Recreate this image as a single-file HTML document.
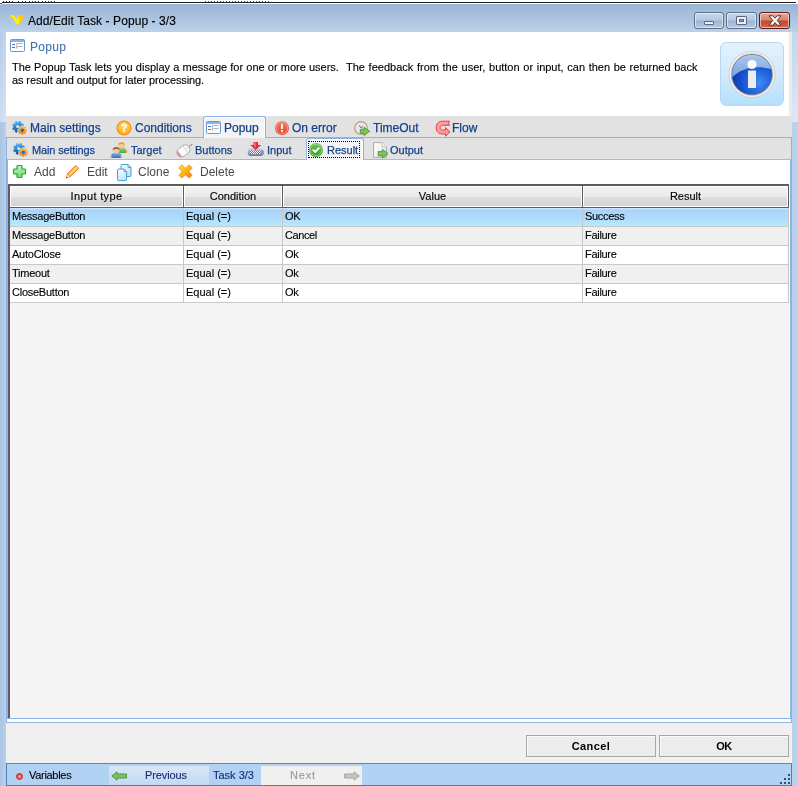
<!DOCTYPE html>
<html>
<head>
<meta charset="utf-8">
<title>Add/Edit Task - Popup - 3/3</title>
<style>
*{box-sizing:border-box;margin:0;padding:0}
html,body{width:798px;height:786px;overflow:hidden}
body{position:relative;background:#b9d1ea;font-family:"Liberation Sans",sans-serif;font-size:11px;color:#000}
.abs{position:absolute}
#root{-webkit-text-stroke:0.12px}
.tab{-webkit-text-stroke:0.25px}
.btn{-webkit-text-stroke:0}
#topstrip{left:0;top:0;width:798px;height:4px;background:#fff}
#topline{left:2px;top:2px;width:794px;height:1px;background:#1e1e1e}
#frame{left:0;top:3px;width:798px;height:783px;background:linear-gradient(to right,#aac4e3 0,#b6ceea 5px,#b8d0ea 6px,#b8d0ea 792px,#bbd2eb 798px)}
#titlebar{left:0;top:4px;width:798px;height:28px;background:linear-gradient(to bottom,#9bb5d5 0,#a8c1df 45%,#bcd1e9 100%)}
#title{left:28px;top:14px;font-size:12px;color:#000;white-space:nowrap;letter-spacing:0.08px}
.wbtn{top:12px;height:17px;border:1px solid #5f6f86;border-radius:3px;background:linear-gradient(to bottom,#c8d8ec 0,#b4c8e2 48%,#9db5d4 52%,#b3c9e4 100%);box-shadow:inset 0 0 0 1px rgba(255,255,255,.55)}
#bclose{border-color:#5a1c1c;background:linear-gradient(to bottom,#e6a797 0,#d8806b 48%,#c2462c 52%,#d06a4c 100%)}
#content{left:6px;top:32px;width:786px;height:731px;background:#f0f0f0}
#hdr{left:6px;top:32px;width:783px;height:84px;background:#fff}
#hdrr{left:789px;top:32px;width:3px;height:84px;background:#ebebeb}
#hname{left:30px;top:40px;font-size:12px;color:#3f73b0;white-space:nowrap;letter-spacing:0.3px;-webkit-text-stroke:0.1px}
#hdesc{left:12px;top:61px;width:700px;font-size:11px;line-height:13px;color:#000;word-spacing:0.5px}
#infobox{left:720px;top:42px;width:64px;height:64px;border:1px solid #b5d8f3;border-radius:6px;background:linear-gradient(to bottom,#e3f1fd 0,#d3eafc 50%,#b5e0fc 100%)}
#tabs1{left:6px;top:116px;width:786px;height:22px;background:#e2e2e2}
#tabs2{left:7px;top:138px;width:784px;height:21px;background:#e2e2e2}
.tab{top:0;height:22px;white-space:nowrap;color:#15428b}
.t1{font-size:12px;line-height:24px}
.t2{font-size:11px;line-height:24px}
#page{left:6px;top:137px;width:786px;height:586px;border:1px solid #8db2e3;border-top:0}
#inner{left:7px;top:159px;width:784px;height:560px;border:1px solid #8db2e3;border-top-color:#99bce8;background:#fff}
.pl{top:137px;height:1px;background:#8db2e3}
#tool{left:8px;top:160px;width:782px;height:24px;background:#fff}
.tl{top:0;line-height:24px;font-size:12px;color:#484848;white-space:nowrap;-webkit-text-stroke:0}
#grid{left:8px;top:184px;width:781px;height:534px;background:#f4f4f4;border-left:2px solid #5c5c5c;border-top:2px solid #5c5c5c}
#ghead{left:0;top:0;width:779px;height:22px;background:#5c5c5c}
.hc{top:0;height:21px;border:1px solid #fff;background:linear-gradient(to bottom,#f3f3f3 0,#e9e9e9 55%,#dddddd 55%,#d3d3d3 100%);text-align:center;line-height:19px;font-size:11px}
.row{left:0;width:779px;height:19px;border-bottom:1px solid #c8c8c8}
.row div{position:absolute;top:0;height:18px;line-height:16px;padding-left:2px;border-right:1px solid #c8c8c8;white-space:nowrap;font-size:11px}
.row .c1{letter-spacing:-0.25px}
.row .c3{letter-spacing:-0.4px}
.row .c4{letter-spacing:-0.3px}
.sel{background:linear-gradient(to bottom,#cbe4fd 0,#cbe4fd 1px,#a9d2fb 2px,#b0dcfc 60%,#b5ebfd 100%)}
.alt{background:#f0f0f0}
.wht{background:#fff}
#sep1{left:6px;top:718px;width:786px;height:5px;background:#fff;border:1px solid #8db2e3}
.btn{top:735px;height:22px;border:1px solid #a8a8a8;background:#ececec;text-align:center;font-weight:bold;font-size:11px;line-height:20px;box-shadow:inset 1px 1px 0 #fafafa}
#status{left:6px;top:763px;width:786px;height:23px;background:#b2d2f4;border:1px solid #4f7db4;border-top-color:#5a86bc}
.sb{top:2px;height:18px;line-height:18px;font-size:11px;white-space:nowrap}

#seltab1{left:197px;top:0;width:63px;height:23px;background:#f4f4f5;border:1px solid #8db2e3;border-bottom:0;border-radius:3px 3px 0 0;box-shadow:inset 1px 1px 0 #fff,inset -1px 0 0 #fff}
#seltab2{left:299px;top:0;width:58px;height:22px;background:#f4f4f5;border:1px solid #8db2e3;border-bottom:0;border-radius:3px 3px 0 0;box-shadow:inset 1px 1px 0 #fff,inset -1px 0 0 #fff}
#focus{left:1px;top:2px;width:52px;height:17px;border:1px dotted #000}
#prevbtn{left:102px;top:2px;width:100px;height:19px;background:linear-gradient(to bottom,#d9e6f7,#c3d9f4)}
#nextbtn{left:254px;top:2px;width:101px;height:19px;background:#f0f0f0}
</style>
</head>
<body>
<div id="root" style="position:absolute;left:0;top:0;width:798px;height:786px;will-change:transform">
<div class="abs" id="frame"></div>
<div class="abs" id="titlebar"></div>
<div class="abs" id="topstrip"></div>
<div class="abs" id="topline"></div><div class="abs" style="left:3px;top:1px;width:1px;height:1px;background:#333"></div><div class="abs" style="left:6px;top:1px;width:1px;height:1px;background:#333"></div><div class="abs" style="left:9px;top:1px;width:1px;height:1px;background:#333"></div><div class="abs" style="left:12px;top:1px;width:1px;height:1px;background:#333"></div><div class="abs" style="left:18px;top:1px;width:1px;height:1px;background:#333"></div><div class="abs" style="left:22px;top:1px;width:1px;height:1px;background:#333"></div><div class="abs" style="left:25px;top:1px;width:1px;height:1px;background:#333"></div><div class="abs" style="left:29px;top:1px;width:1px;height:1px;background:#333"></div><div class="abs" style="left:32px;top:1px;width:1px;height:1px;background:#333"></div><div class="abs" style="left:35px;top:1px;width:1px;height:1px;background:#333"></div><div class="abs" style="left:38px;top:1px;width:1px;height:1px;background:#333"></div><div class="abs" style="left:42px;top:1px;width:1px;height:1px;background:#333"></div><div class="abs" style="left:45px;top:1px;width:1px;height:1px;background:#333"></div><div class="abs" style="left:48px;top:1px;width:1px;height:1px;background:#333"></div><div class="abs" style="left:51px;top:1px;width:1px;height:1px;background:#333"></div><div class="abs" style="left:54px;top:1px;width:1px;height:1px;background:#333"></div><div class="abs" style="left:205px;top:1px;width:1px;height:1px;background:#555"></div><div class="abs" style="left:208px;top:1px;width:1px;height:1px;background:#555"></div><div class="abs" style="left:211px;top:1px;width:1px;height:1px;background:#555"></div><div class="abs" style="left:214px;top:1px;width:1px;height:1px;background:#555"></div><div class="abs" style="left:217px;top:1px;width:1px;height:1px;background:#555"></div><div class="abs" style="left:220px;top:1px;width:1px;height:1px;background:#555"></div><div class="abs" style="left:223px;top:1px;width:1px;height:1px;background:#555"></div><div class="abs" style="left:226px;top:1px;width:1px;height:1px;background:#555"></div><div class="abs" style="left:229px;top:1px;width:1px;height:1px;background:#555"></div><div class="abs" style="left:232px;top:1px;width:1px;height:1px;background:#555"></div><div class="abs" style="left:235px;top:1px;width:1px;height:1px;background:#555"></div><div class="abs" style="left:238px;top:1px;width:1px;height:1px;background:#555"></div><div class="abs" style="left:241px;top:1px;width:1px;height:1px;background:#555"></div><div class="abs" style="left:244px;top:1px;width:1px;height:1px;background:#555"></div><div class="abs" style="left:247px;top:1px;width:1px;height:1px;background:#555"></div><div class="abs" style="left:250px;top:1px;width:1px;height:1px;background:#555"></div><div class="abs" style="left:253px;top:1px;width:1px;height:1px;background:#555"></div><div class="abs" style="left:256px;top:1px;width:1px;height:1px;background:#555"></div><div class="abs" style="left:259px;top:1px;width:1px;height:1px;background:#555"></div><div class="abs" style="left:262px;top:1px;width:1px;height:1px;background:#555"></div><div class="abs" style="left:265px;top:1px;width:1px;height:1px;background:#555"></div><div class="abs" style="left:268px;top:1px;width:1px;height:1px;background:#555"></div><div class="abs" style="left:0;top:3px;width:2px;height:1px;background:#555"></div><div class="abs" style="left:0;top:4px;width:1px;height:1px;background:#fff"></div>
<svg class="abs" style="left:8px;top:14px" width="16" height="11" viewBox="0 0 16 11"><path d="M0.8 3.6 L2.4 0.9 L5.8 0.9 L9.7 6.4 L9.1 0.9 L13.9 0.9 L15.3 3.6 L11.8 10.3 L8.2 10.3 L4.6 3.6 Z" fill="#fff200"/><path d="M9.1 0.9 L13.9 0.9 L15.3 3.6 L11.8 10.3 L10.6 10.3 L11.9 5.4 Z" fill="#ffc60a"/><path d="M0.8 3.6 L2.4 0.9 L3.6 0.9 L3 3.6Z" fill="#ffc60a"/></svg>
<div class="abs" id="title">Add/Edit Task - Popup - 3/3</div>
<div class="abs wbtn" id="bmin" style="left:694px;width:30px"><div class="abs" style="left:9px;top:8px;width:10px;height:4px;background:#e8eef6;border:1px solid #5a6880;border-radius:1px"></div></div>
<div class="abs wbtn" id="bmax" style="left:726px;width:31px"><div class="abs" style="left:9px;top:3px;width:11px;height:9px;background:#e8eef6;border:1px solid #5a6880;border-radius:1px"><div class="abs" style="left:2px;top:2px;width:5px;height:3px;background:#8aa2c4;border:1px solid #5a6880"></div></div></div>
<div class="abs wbtn" id="bclose" style="left:759px;width:31px"><svg class="abs" style="left:8px;top:2px" width="14" height="11" viewBox="0 0 14 11"><path d="M1 0.8 L4.8 0.8 L7 3.2 L9.2 0.8 L13 0.8 L9.2 5.4 L13 10.2 L9.2 10.2 L7 7.6 L4.8 10.2 L1 10.2 L4.8 5.4 Z" fill="#f6f6f6" stroke="#4a3030" stroke-width="0.9"/></svg></div>

<div class="abs" style="left:0;top:32px;width:6px;height:90px;background:linear-gradient(to bottom,rgba(255,255,255,0.12),rgba(255,255,255,0.42))"></div>
<div class="abs" style="left:792px;top:32px;width:6px;height:90px;background:linear-gradient(to bottom,rgba(255,255,255,0.12),rgba(255,255,255,0.5))"></div>
<div class="abs" id="content"></div>
<div class="abs" id="hdr"></div>
<div class="abs" id="hdrr"></div>
<svg class="abs" style="left:10px;top:39px" width="16" height="14" viewBox="0 0 16 14"><rect x="0.5" y="0.5" width="14" height="12" rx="1" fill="#fbfcfe" stroke="#6a95d2"/><rect x="1" y="1" width="13" height="2" fill="#8db3e8"/><rect x="2" y="5" width="3" height="1" fill="#3d77d8"/><rect x="2" y="8" width="3" height="1" fill="#3d77d8"/><path d="M6.5 6.5 L6.5 4.5 L12.5 4.5 M6.5 9.5 L6.5 7.5 L12.5 7.5" fill="none" stroke="#b4b4b4" stroke-width="1"/></svg>
<div class="abs" id="hname">Popup</div>
<div class="abs" id="hdesc"><span id="hd1" style="display:block;white-space:nowrap;height:13px;position:relative"><span id="hd1a" style="position:absolute;left:0;top:0;word-spacing:0.1px;letter-spacing:0">The Popup Task lets you display a message for one or more users.</span><span id="hd1b" style="position:absolute;left:334px;top:0;word-spacing:0.6px;letter-spacing:0">The feedback from the user, button or input, can then be returned back</span></span><span id="hd2" style="display:block;white-space:nowrap;word-spacing:0;letter-spacing:-0.1px">as result and output for later processing.</span></div>
<div class="abs" id="infobox"></div>
<svg class="abs" style="left:727px;top:50px" width="50" height="50" viewBox="0 0 50 50">
<defs>
<radialGradient id="ig" cx="68%" cy="70%" r="75%"><stop offset="0" stop-color="#3d8bf2"/><stop offset="0.6" stop-color="#1450d0"/><stop offset="1" stop-color="#0b2f9e"/></radialGradient>
<linearGradient id="ih" x1="0" y1="0" x2="0" y2="1"><stop offset="0" stop-color="#b9cfee"/><stop offset="1" stop-color="#6f9de0"/></linearGradient>
<clipPath id="ic"><circle cx="25" cy="24.5" r="20"/></clipPath>
</defs>
<circle cx="25" cy="24.5" r="23" fill="#f2f2f2" stroke="#c9c9c9" stroke-width="0.8"/>
<circle cx="25" cy="24.5" r="21" fill="#9a9a9a"/>
<circle cx="25" cy="24.5" r="20" fill="url(#ig)"/>
<path d="M3 30 C 12 18, 30 14, 47 20 L47 0 L3 0Z" fill="url(#ih)" clip-path="url(#ic)"/>
<circle cx="25" cy="14.5" r="4.6" fill="#fff"/>
<rect x="21" y="20.5" width="8" height="17.5" fill="#ededed"/>
</svg>


<div class="abs" id="tabs1">
<div class="abs" id="seltab1"></div>
<div class="abs tab t1" id="a1" style="left:24px">Main settings</div>
<div class="abs tab t1" id="a2" style="left:129px">Conditions</div>
<div class="abs tab t1" id="a3" style="left:218px">Popup</div>
<div class="abs tab t1" id="a4" style="left:286px">On error</div>
<div class="abs tab t1" id="a5" style="left:367px">TimeOut</div>
<div class="abs tab t1" id="a6" style="left:446px">Flow</div>
</div>
<div class="abs" id="page"></div><div class="abs" id="inner"></div>
<div class="abs pl" style="left:6px;width:198px"></div><div class="abs pl" style="left:265px;width:527px"></div>

<div class="abs" id="tabs2">
<div class="abs" id="seltab2"><div class="abs" id="focus"></div></div>
<div class="abs tab t2" id="b1" style="left:25px;letter-spacing:-0.15px">Main settings</div>
<div class="abs tab t2" id="b2" style="left:124px">Target</div>
<div class="abs tab t2" id="b3" style="left:188px">Buttons</div>
<div class="abs tab t2" id="b4" style="left:260px">Input</div>
<div class="abs tab t2" id="b5" style="left:320px">Result</div>
<div class="abs tab t2" id="b6" style="left:383px">Output</div>
</div>

<div class="abs" id="tool">
<div class="abs tl" id="c1" style="left:26px">Add</div>
<div class="abs tl" id="c2" style="left:79px">Edit</div>
<div class="abs tl" id="c3" style="left:130px">Clone</div>
<div class="abs tl" id="c4" style="left:192px">Delete</div>
</div>
<div class="abs" id="grid">
<div class="abs" id="ghead"></div>
<div class="abs hc" style="left:0;width:173px;letter-spacing:0.35px">Input type</div>
<div class="abs hc" style="left:174px;width:98px">Condition</div>
<div class="abs hc" style="left:273px;width:299px">Value</div>
<div class="abs hc" style="left:573px;width:205px">Result</div>
<div class="abs row sel" style="top:22px"><div class="c1" style="left:0;width:174px">MessageButton</div><div class="c2" style="left:174px;width:99px">Equal (=)</div><div class="c3" style="left:273px;width:300px">OK</div><div class="c4" style="left:573px;width:206px">Success</div></div>
<div class="abs row alt" style="top:41px"><div class="c1" style="left:0;width:174px">MessageButton</div><div class="c2" style="left:174px;width:99px">Equal (=)</div><div class="c3" style="left:273px;width:300px">Cancel</div><div class="c4" style="left:573px;width:206px">Failure</div></div>
<div class="abs row wht" style="top:60px"><div class="c1" style="left:0;width:174px">AutoClose</div><div class="c2" style="left:174px;width:99px">Equal (=)</div><div class="c3" style="left:273px;width:300px">Ok</div><div class="c4" style="left:573px;width:206px">Failure</div></div>
<div class="abs row alt" style="top:79px"><div class="c1" style="left:0;width:174px">Timeout</div><div class="c2" style="left:174px;width:99px">Equal (=)</div><div class="c3" style="left:273px;width:300px">Ok</div><div class="c4" style="left:573px;width:206px">Failure</div></div>
<div class="abs row wht" style="top:98px"><div class="c1" style="left:0;width:174px">CloseButton</div><div class="c2" style="left:174px;width:99px">Equal (=)</div><div class="c3" style="left:273px;width:300px">Ok</div><div class="c4" style="left:573px;width:206px">Failure</div></div>
</div>
<div class="abs" id="sep1"></div>
<div class="abs btn" style="left:526px;width:130px;letter-spacing:0.4px">Cancel</div>
<div class="abs btn" style="left:659px;width:130px;letter-spacing:-0.6px">OK</div>

<div class="abs" id="status">
<div class="abs" style="left:9px;top:9px;width:7px;height:7px;border-radius:4px;background:#e23a40;border:1px solid #d3353a"><div class="abs" style="left:1px;top:1px;width:3px;height:3px;border-radius:2px;background:#f29a9c"></div></div>
<div class="abs sb" id="s1" style="left:22px;letter-spacing:-0.3px">Variables</div>
<div class="abs" id="prevbtn"></div>
<div class="abs sb" id="s2" style="left:138px;letter-spacing:-0.1px;color:#1a2a78">Previous</div>
<div class="abs sb" id="s3" style="left:206px;color:#1a2a78">Task 3/3</div>
<div class="abs" id="nextbtn"></div>
<svg class="abs" style="left:104px;top:7px" width="17" height="10" viewBox="0 0 17 10"><path d="M0.8 5 L6 0.8 L6 3 L15.5 3 L15.5 7 L6 7 L6 9.2 Z" fill="#7cc266" stroke="#4c9a3c" stroke-width="1"/></svg>
<svg class="abs" style="left:336px;top:7px" width="17" height="10" viewBox="0 0 17 10"><path d="M16.2 5 L11 0.8 L11 3 L1.5 3 L1.5 7 L11 7 L11 9.2 Z" fill="#c4c4c4" stroke="#a6a6a6" stroke-width="1"/></svg>
<div class="abs" style="left:773px;top:18px;width:2px;height:2px;background:#33506f"></div><div class="abs" style="left:777px;top:18px;width:2px;height:2px;background:#33506f"></div><div class="abs" style="left:781px;top:18px;width:2px;height:2px;background:#33506f"></div><div class="abs" style="left:777px;top:14px;width:2px;height:2px;background:#33506f"></div><div class="abs" style="left:781px;top:14px;width:2px;height:2px;background:#33506f"></div><div class="abs" style="left:781px;top:10px;width:2px;height:2px;background:#33506f"></div>
<div class="abs sb" id="s4" style="left:283px;letter-spacing:0.8px;color:#9a9a9a">Next</div>
</div>
<!--ICONS-->
<svg class="abs" style="left:12px;top:120.5px" width="16" height="15" viewBox="0 0 16 15"><defs><linearGradient id="gb1" x1="0" y1="0" x2="0.3" y2="1"><stop offset="0" stop-color="#7fcdfa"/><stop offset="0.5" stop-color="#2b8ada"/><stop offset="1" stop-color="#0b4fa0"/></linearGradient><linearGradient id="go1" x1="0" y1="0" x2="0" y2="1"><stop offset="0" stop-color="#ffc53a"/><stop offset="1" stop-color="#f0760c"/></linearGradient></defs><path d="M10.58 6.21 L11.88 6.98 L10.99 9.13 L9.53 8.75 L8.95 9.33 L9.33 10.79 L7.18 11.68 L6.41 10.38 L5.59 10.38 L4.82 11.68 L2.67 10.79 L3.05 9.33 L2.47 8.75 L1.01 9.13 L0.12 6.98 L1.42 6.21 L1.42 5.39 L0.12 4.62 L1.01 2.47 L2.47 2.85 L3.05 2.27 L2.67 0.81 L4.82 -0.08 L5.59 1.22 L6.41 1.22 L7.18 -0.08 L9.33 0.81 L8.95 2.27 L9.53 2.85 L10.99 2.47 L11.88 4.62 L10.58 5.39Z" fill="url(#gb1)"/><circle cx="5.6" cy="5.6" r="1.5" fill="#e2e2e2"/><path d="M13.83 8.19 L15.11 8.35 L15.11 10.25 L13.83 10.41 L13.58 11.01 L14.37 12.03 L13.03 13.37 L12.01 12.58 L11.41 12.83 L11.25 14.11 L9.35 14.11 L9.19 12.83 L8.59 12.58 L7.57 13.37 L6.23 12.03 L7.02 11.01 L6.77 10.41 L5.49 10.25 L5.49 8.35 L6.77 8.19 L7.02 7.59 L6.23 6.57 L7.57 5.23 L8.59 6.02 L9.19 5.77 L9.35 4.49 L11.25 4.49 L11.41 5.77 L12.01 6.02 L13.03 5.23 L14.37 6.57 L13.58 7.59Z" fill="url(#go1)" stroke="#e2e2e2" stroke-width="0.5"/><circle cx="10.3" cy="9.3" r="1.7" fill="#1a6fd0"/></svg>
<svg class="abs" style="left:13px;top:142.5px" width="16" height="15" viewBox="0 0 16 15"><defs><linearGradient id="gb2" x1="0" y1="0" x2="0.3" y2="1"><stop offset="0" stop-color="#7fcdfa"/><stop offset="0.5" stop-color="#2b8ada"/><stop offset="1" stop-color="#0b4fa0"/></linearGradient><linearGradient id="go2" x1="0" y1="0" x2="0" y2="1"><stop offset="0" stop-color="#ffc53a"/><stop offset="1" stop-color="#f0760c"/></linearGradient></defs><path d="M10.58 6.21 L11.88 6.98 L10.99 9.13 L9.53 8.75 L8.95 9.33 L9.33 10.79 L7.18 11.68 L6.41 10.38 L5.59 10.38 L4.82 11.68 L2.67 10.79 L3.05 9.33 L2.47 8.75 L1.01 9.13 L0.12 6.98 L1.42 6.21 L1.42 5.39 L0.12 4.62 L1.01 2.47 L2.47 2.85 L3.05 2.27 L2.67 0.81 L4.82 -0.08 L5.59 1.22 L6.41 1.22 L7.18 -0.08 L9.33 0.81 L8.95 2.27 L9.53 2.85 L10.99 2.47 L11.88 4.62 L10.58 5.39Z" fill="url(#gb2)"/><circle cx="5.6" cy="5.6" r="1.5" fill="#e2e2e2"/><path d="M13.83 8.19 L15.11 8.35 L15.11 10.25 L13.83 10.41 L13.58 11.01 L14.37 12.03 L13.03 13.37 L12.01 12.58 L11.41 12.83 L11.25 14.11 L9.35 14.11 L9.19 12.83 L8.59 12.58 L7.57 13.37 L6.23 12.03 L7.02 11.01 L6.77 10.41 L5.49 10.25 L5.49 8.35 L6.77 8.19 L7.02 7.59 L6.23 6.57 L7.57 5.23 L8.59 6.02 L9.19 5.77 L9.35 4.49 L11.25 4.49 L11.41 5.77 L12.01 6.02 L13.03 5.23 L14.37 6.57 L13.58 7.59Z" fill="url(#go2)" stroke="#e2e2e2" stroke-width="0.5"/><circle cx="10.3" cy="9.3" r="1.7" fill="#1a6fd0"/></svg>
<svg class="abs" style="left:116px;top:120px" width="16" height="16" viewBox="0 0 16 16"><defs><radialGradient id="cq" cx="50%" cy="35%" r="65%"><stop offset="0" stop-color="#ffd95a"/><stop offset="1" stop-color="#ffab1e"/></radialGradient></defs><circle cx="8" cy="8" r="6.9" fill="url(#cq)" stroke="#ff8b1f" stroke-width="1.3"/><path d="M5.2 6.4 C5.2 4.3 6.6 3.5 8.1 3.5 C9.7 3.5 10.9 4.4 10.9 5.9 C10.9 7.7 9 7.9 9 9.5 L7 9.5 C7 7.3 8.8 7.1 8.8 6 C8.8 5.5 8.5 5.2 8.05 5.2 C7.5 5.2 7.2 5.6 7.2 6.4 Z" fill="#fff"/><rect x="7" y="10.3" width="2" height="1.9" fill="#fff"/></svg>
<svg class="abs" style="left:206px;top:121px" width="16" height="14" viewBox="0 0 16 14"><rect x="0.5" y="0.5" width="14" height="12" rx="1" fill="#fbfcfe" stroke="#6a95d2"/><rect x="1" y="1" width="13" height="2" fill="#8db3e8"/><rect x="2" y="5" width="3" height="1" fill="#3d77d8"/><rect x="2" y="8" width="3" height="1" fill="#3d77d8"/><path d="M6.5 6.5 L6.5 4.5 L12.5 4.5 M6.5 9.5 L6.5 7.5 L12.5 7.5" fill="none" stroke="#b4b4b4" stroke-width="1"/></svg>
<svg class="abs" style="left:274px;top:120px" width="16" height="16" viewBox="0 0 16 16"><defs><linearGradient id="oe" x1="0" y1="0" x2="0" y2="1"><stop offset="0" stop-color="#f08060"/><stop offset="1" stop-color="#e0452a"/></linearGradient></defs><circle cx="8" cy="8" r="7" fill="url(#oe)"/><circle cx="8" cy="8" r="5.7" fill="none" stroke="#f6b09c" stroke-width="0.7"/><rect x="7.1" y="3.8" width="1.8" height="5.3" rx="0.5" fill="#fff"/><rect x="7.1" y="10.1" width="1.8" height="1.8" rx="0.5" fill="#fff"/></svg>
<svg class="abs" style="left:353px;top:120px" width="18" height="17" viewBox="0 0 18 17"><circle cx="8" cy="8" r="6.2" fill="#eef4fc" stroke="#c9a26b" stroke-width="1.4"/><circle cx="8" cy="8" r="4.6" fill="#dce9fa"/><path d="M8 8 L6.2 5.3 M8 8 L10.2 6" stroke="#777" stroke-width="1" fill="none"/><path d="M7.3 9.3 L11 9.3 L11 7.2 L16.6 11.3 L11 15.6 L11 13.4 L7.3 13.4 Z" fill="#7dc25e" stroke="#3f9a2a" stroke-width="0.9"/></svg>
<svg class="abs" style="left:435px;top:120px" width="16" height="17" viewBox="0 0 16 17"><path d="M14.6 1.2 L7.4 1.2 C3.2 1.2 1.2 4 1.2 7.6 C1.2 11.2 3.2 14 7.4 14 L10.6 14 L10.6 16.2 L15 11.9 L10.6 7.6 L10.6 9.9 L7.6 9.9 C5.8 9.9 5.2 8.9 5.2 7.6 C5.2 6.3 5.8 5.3 7.6 5.3 L14.6 5.3 L13.4 3.2 Z" fill="#f99c9c" stroke="#f23c3c" stroke-width="1" stroke-linejoin="round"/></svg>
<svg class="abs" style="left:110px;top:141px" width="18" height="18" viewBox="0 0 18 18"><defs><linearGradient id="pg" x1="0" y1="0" x2="0" y2="1"><stop offset="0" stop-color="#8fd487"/><stop offset="1" stop-color="#4aa84a"/></linearGradient><linearGradient id="pb" x1="0" y1="0" x2="0" y2="1"><stop offset="0" stop-color="#6fb4f4"/><stop offset="1" stop-color="#2a72d8"/></linearGradient></defs>
<path d="M8.6 7.2 C8.6 5.8 14.6 5.8 15 7.2 L17 10.6 L16 12 L9 12 Z" fill="url(#pg)"/><rect x="15.6" y="9.2" width="1.6" height="2.4" fill="#f0a040"/>
<circle cx="11.6" cy="4.2" r="3.3" fill="#f6c79a"/><path d="M8.2 4.4 C8 0.2 15.2 0.2 15 4.4 C14 2.6 9.4 2.6 8.2 4.4Z" fill="#e6a21c"/>
<path d="M1.4 13.6 C2 11.2 10.4 11.2 11 13.6 L11.6 17 L0.8 17 Z" fill="url(#pb)"/><rect x="0.6" y="14.6" width="1.6" height="2.2" fill="#f0a040"/><rect x="10.2" y="14.6" width="1.6" height="2.2" fill="#f0a040"/>
<circle cx="6.2" cy="9.2" r="3.4" fill="#f6c79a"/><path d="M2.7 9.4 C2.4 5 10 5 9.7 9.4 C8.8 7.4 3.8 7.4 2.7 9.4Z" fill="#9a6238"/></svg>
<svg class="abs" style="left:176px;top:142px" width="18" height="16" viewBox="0 0 18 16"><g transform="rotate(-38 8 9)"><path d="M14 8.6 L19 8.6" stroke="#9a9a9a" stroke-width="1.2"/><rect x="0.6" y="4" width="14" height="9.2" rx="4.6" fill="#fafafa" stroke="#a8a8a8" stroke-width="0.9"/><path d="M0.9 8.6 C0.9 6.4 1.6 5.4 3 4.9 L3 12.3 C1.6 11.8 0.9 10.8 0.9 8.6Z" fill="#f47c7c"/><path d="M10.2 4.3 L10.2 12.9 M10.2 8.6 L14.4 8.6" stroke="#c4c4c4" stroke-width="0.7" fill="none"/></g></svg>
<svg class="abs" style="left:247px;top:141px" width="18" height="16" viewBox="0 0 18 16"><defs><linearGradient id="kb" x1="0" y1="0" x2="0" y2="1"><stop offset="0" stop-color="#c4cde8"/><stop offset="0.5" stop-color="#9aa8d0"/><stop offset="1" stop-color="#6c7890"/></linearGradient><pattern id="kk" width="2" height="2" patternUnits="userSpaceOnUse"><rect width="1" height="1" fill="#fff"/><rect x="1" y="1" width="1" height="1" fill="#fff"/><rect x="1" width="1" height="1" fill="#5670a8"/><rect y="1" width="1" height="1" fill="#5670a8"/></pattern></defs><path d="M2.4 7.6 L14.8 7.6 L16.8 9.4 L16.8 13.2 L14.6 15 L2.6 15 L0.8 13.2 L0.8 9.4 Z" fill="url(#kb)"/><rect x="3" y="9.4" width="10.6" height="3.6" fill="url(#kk)"/><rect x="14.6" y="9.6" width="1.6" height="3" fill="#5d86c8"/><path d="M6.4 1 L11 1 L11 4 L14.2 4 L8.7 9 L3.2 4 L6.4 4 Z" fill="#e8283c"/><path d="M7.2 1.6 L8.6 1.6 L8.6 6.6 L7.2 5.4Z" fill="#f48a94"/></svg>
<svg class="abs" style="left:308px;top:142px" width="16" height="16" viewBox="0 0 16 16"><defs><linearGradient id="rg" x1="0" y1="0" x2="0" y2="1"><stop offset="0" stop-color="#6cc45a"/><stop offset="1" stop-color="#3c9a30"/></linearGradient></defs><circle cx="8" cy="8" r="7" fill="url(#rg)"/><circle cx="8" cy="8" r="5.7" fill="none" stroke="#a8dc9c" stroke-width="0.7"/><path d="M4.2 8.2 L5.6 6.9 L7.2 8.6 L10.6 5 L12 6.3 L7.2 11.2 Z" fill="#fff"/></svg>
<svg class="abs" style="left:372px;top:141px" width="18" height="18" viewBox="0 0 18 18"><defs><linearGradient id="og" x1="0" y1="0" x2="1" y2="1"><stop offset="0" stop-color="#ffffff"/><stop offset="1" stop-color="#e6e6e6"/></linearGradient></defs><path d="M1.6 1.6 L10 1.6 L14.4 6 L14.4 16.4 L1.6 16.4 Z" fill="url(#og)" stroke="#a9a9a9" stroke-width="1"/><path d="M10 1.6 L10 6 L14.4 6" fill="#f4f4f4" stroke="#b8b8b8" stroke-width="0.8"/><path d="M6.2 10.6 L10.4 10.6 L10.4 8.4 L16 12.6 L10.4 17 L10.4 14.8 L6.2 14.8 Z" fill="#7dc25e" stroke="#3f9a2a" stroke-width="0.9"/></svg>
<svg class="abs" style="left:12px;top:164px" width="15" height="15" viewBox="0 0 15 15"><defs><linearGradient id="ad" x1="0" y1="0" x2="0" y2="1"><stop offset="0" stop-color="#c6f0c6"/><stop offset="1" stop-color="#74d474"/></linearGradient></defs><path d="M5.8 1.5 L9.2 1.5 Q10 1.5 10 2.3 L10 5 L12.7 5 Q13.5 5 13.5 5.8 L13.5 9.2 Q13.5 10 12.7 10 L10 10 L10 12.7 Q10 13.5 9.2 13.5 L5.8 13.5 Q5 13.5 5 12.7 L5 10 L2.3 10 Q1.5 10 1.5 9.2 L1.5 5.8 Q1.5 5 2.3 5 L5 5 L5 2.3 Q5 1.5 5.8 1.5 Z" fill="url(#ad)" stroke="#1cae1c" stroke-width="1.2"/></svg>
<svg class="abs" style="left:65px;top:164px" width="16" height="16" viewBox="0 0 16 16"><path d="M10.6 1.4 L13.8 4.2 L5.4 12.6 L2.2 9.8 Z" fill="#ffb637" stroke="#e9792a" stroke-width="0.9" stroke-linejoin="round"/><path d="M11.2 2.6 L12.8 4 L5.2 11.4 L3.8 10.2Z" fill="#ffd36a"/><path d="M2.2 9.8 L5.4 12.6 L1.4 13.8 Z" fill="#fdf0d8" stroke="#e9792a" stroke-width="0.7" stroke-linejoin="round"/><path d="M1 14.4 L2.6 13.4 L1.8 12.8Z" fill="#222"/></svg>
<svg class="abs" style="left:116px;top:163px" width="17" height="19" viewBox="0 0 17 19"><defs><linearGradient id="cl" x1="0" y1="0" x2="0.4" y2="1"><stop offset="0" stop-color="#ffffff"/><stop offset="1" stop-color="#c4e4f6"/></linearGradient></defs><path d="M6 1.5 L12 1.5 L15 4.5 L15 12.6 Q15 13.5 14 13.5 L6 13.5 Q5 13.5 5 12.6 L5 2.5 Q5 1.5 6 1.5Z" fill="url(#cl)" stroke="#3ea2d2" stroke-width="1"/><path d="M12 1.5 L12 4.5 L15 4.5" fill="none" stroke="#3ea2d2" stroke-width="0.9"/><path d="M2.4 6 L8 6 L10.6 8.6 L10.6 16.8 Q10.6 17.6 9.8 17.6 L2.4 17.6 Q1.5 17.6 1.5 16.8 L1.5 6.9 Q1.5 6 2.4 6Z" fill="url(#cl)" stroke="#3ea2d2" stroke-width="1"/><path d="M8 6 L8 8.6 L10.6 8.6" fill="none" stroke="#3ea2d2" stroke-width="0.9"/></svg>
<svg class="abs" style="left:178px;top:164px" width="15" height="15" viewBox="0 0 15 15"><defs><linearGradient id="dl" x1="0" y1="0" x2="1" y2="1"><stop offset="0" stop-color="#ffe41e"/><stop offset="0.5" stop-color="#ffb414"/><stop offset="1" stop-color="#ff6a14"/></linearGradient></defs><path d="M1.2 3.4 L3.4 1.2 Q4 0.8 4.6 1.4 L7.5 4.4 L10.4 1.4 Q11 0.8 11.6 1.2 L13.8 3.4 Q14.2 4 13.6 4.6 L10.7 7.5 L13.6 10.4 Q14.2 11 13.8 11.6 L11.6 13.8 Q11 14.2 10.4 13.6 L7.5 10.7 L4.6 13.6 Q4 14.2 3.4 13.8 L1.2 11.6 Q0.8 11 1.4 10.4 L4.3 7.5 L1.4 4.6 Q0.8 4 1.2 3.4Z" fill="url(#dl)" stroke="#f08a3c" stroke-width="0.9"/></svg>
<!--/ICONS-->
</div>
</body>
</html>
